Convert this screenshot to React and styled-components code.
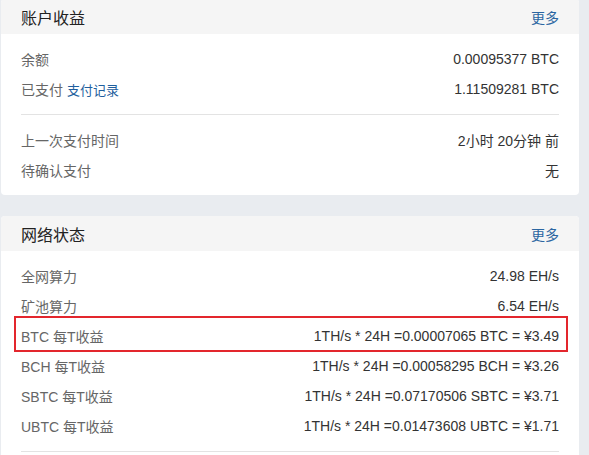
import React from "react";
import styled, { createGlobalStyle } from "styled-components";

const Global = createGlobalStyle`
  html, body { margin: 0; padding: 0; background: #e9ecf0; }
  body {
    font-family: "Liberation Sans", Arial, "Noto Sans CJK SC", sans-serif;
    font-size: 14px;
    color: #333;
  }
`;

const Page = styled.div`
  display: flex;
  flex-direction: column;
  gap: 21px;
  padding: 0 10px 0 1px;
  margin-top: -1px;
`;

const Card = styled.section`
  background: #fff;
  border-radius: 4px;
  overflow: hidden;
`;

const Header = styled.header`
  height: 35px;
  background: #f5f5f5;
  display: flex;
  align-items: center;
  justify-content: space-between;
  padding: 0 20px;
`;

const Title = styled.h3`
  margin: 0;
  font-size: 16px;
  font-weight: normal;
  color: #222;
`;

const Link = styled.a`
  color: ${(p) => (p.$small ? "#1f5f9e" : "#2b66a1")};
  font-size: ${(p) => (p.$small ? "13px" : "14px")};
  text-decoration: none;
  margin-left: ${(p) => (p.$small ? "4px" : "0")};
  cursor: pointer;
`;

const Body = styled.div`
  padding: 10px 20px;
`;

const Row = styled.div`
  position: relative;
  height: 30px;
  display: flex;
  align-items: center;
  justify-content: space-between;
  ${(p) =>
    p.$highlight &&
    `
    &::after {
      content: "";
      position: absolute;
      top: -5px;
      bottom: -1px;
      left: -7px;
      right: -9px;
      border: 2px solid #e3262d;
      pointer-events: none;
    }
  `}
`;

const Label = styled.span`
  color: #666;
  display: flex;
  align-items: baseline;
`;

const Value = styled.span`
  color: #333;
`;

const Divider = styled.hr`
  border: 0;
  border-top: 1px solid #e3e3e3;
  margin: 10px 0;
`;

const netRows = [
  { label: "全网算力", value: "24.98 EH/s" },
  { label: "矿池算力", value: "6.54 EH/s" },
  { label: "BTC 每T收益", value: "1TH/s * 24H =0.00007065 BTC = ¥3.49", hl: true },
  { label: "BCH 每T收益", value: "1TH/s * 24H =0.00058295 BCH = ¥3.26" },
  { label: "SBTC 每T收益", value: "1TH/s * 24H =0.07170506 SBTC = ¥3.71" },
  { label: "UBTC 每T收益", value: "1TH/s * 24H =0.01473608 UBTC = ¥1.71" },
];

export default function App() {
  return (
    <>
      <Global />
      <Page>
        <Card>
          <Header>
            <Title>账户收益</Title>
            <Link>更多</Link>
          </Header>
          <Body>
            <Row>
              <Label>余额</Label>
              <Value>0.00095377 BTC</Value>
            </Row>
            <Row>
              <Label>
                已支付<Link $small>支付记录</Link>
              </Label>
              <Value>1.11509281 BTC</Value>
            </Row>
            <Divider />
            <Row>
              <Label>上一次支付时间</Label>
              <Value>2小时 20分钟 前</Value>
            </Row>
            <Row>
              <Label>待确认支付</Label>
              <Value>无</Value>
            </Row>
          </Body>
        </Card>
        <Card>
          <Header>
            <Title>网络状态</Title>
            <Link>更多</Link>
          </Header>
          <Body>
            {netRows.map((r) => (
              <Row key={r.label} $highlight={r.hl}>
                <Label>{r.label}</Label>
                <Value>{r.value}</Value>
              </Row>
            ))}
            <Divider />
          </Body>
        </Card>
      </Page>
    </>
  );
}
